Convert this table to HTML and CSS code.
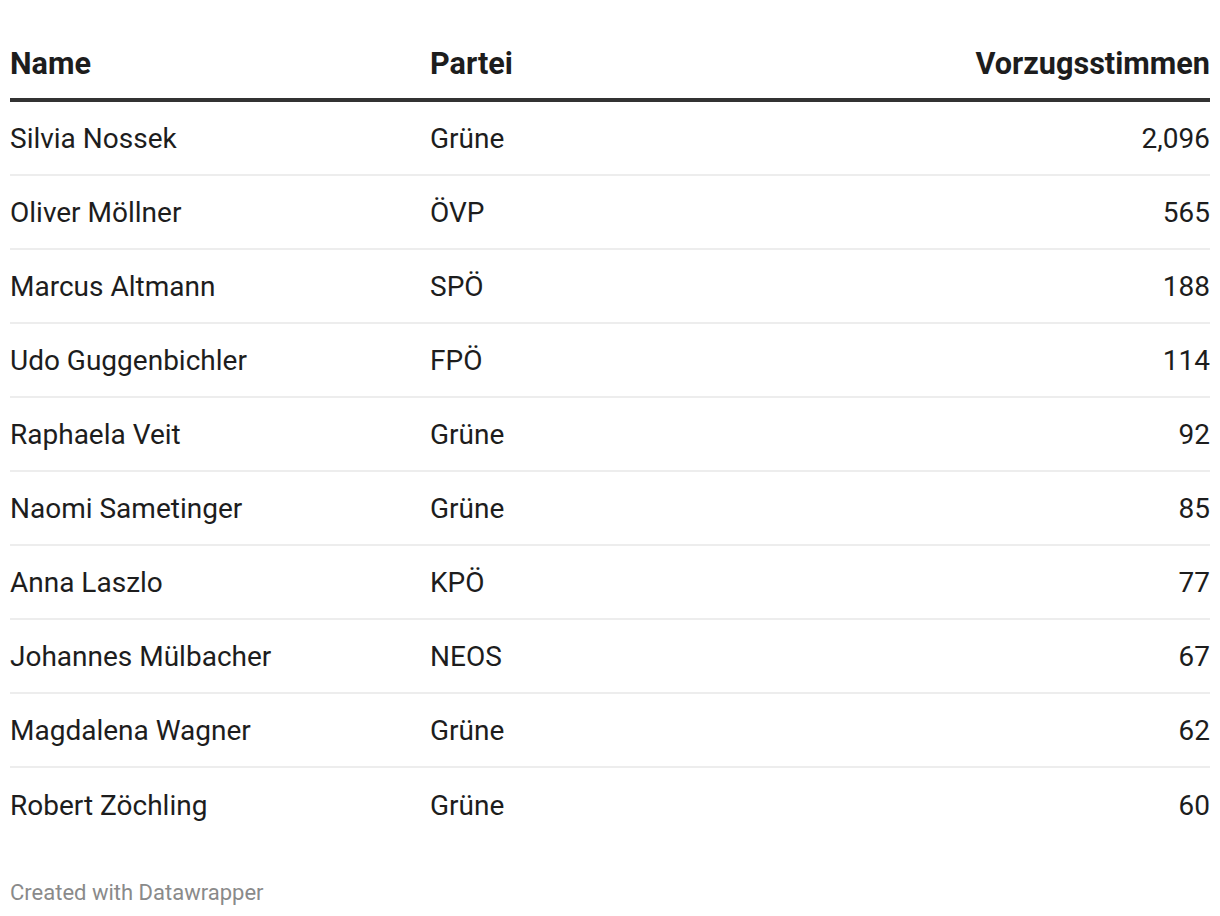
FILE: index.html
```html
<!DOCTYPE html>
<html lang="de">
<head>
<meta charset="utf-8">
<title>Vorzugsstimmen</title>
<link rel="stylesheet" href="styles.css">
</head>
<body>
<div class="wrap">
  <div class="table">
    <div class="row head">
      <div class="cell c-name">Name</div>
      <div class="cell c-party">Partei</div>
      <div class="cell c-votes">Vorzugsstimmen</div>
    </div>
    <div class="row"><div class="cell c-name">Silvia Nossek</div><div class="cell c-party">Grüne</div><div class="cell c-votes">2,096</div></div>
    <div class="row"><div class="cell c-name">Oliver Möllner</div><div class="cell c-party">ÖVP</div><div class="cell c-votes">565</div></div>
    <div class="row"><div class="cell c-name">Marcus Altmann</div><div class="cell c-party">SPÖ</div><div class="cell c-votes">188</div></div>
    <div class="row"><div class="cell c-name">Udo Guggenbichler</div><div class="cell c-party">FPÖ</div><div class="cell c-votes">114</div></div>
    <div class="row"><div class="cell c-name">Raphaela Veit</div><div class="cell c-party">Grüne</div><div class="cell c-votes">92</div></div>
    <div class="row"><div class="cell c-name">Naomi Sametinger</div><div class="cell c-party">Grüne</div><div class="cell c-votes">85</div></div>
    <div class="row"><div class="cell c-name">Anna Laszlo</div><div class="cell c-party">KPÖ</div><div class="cell c-votes">77</div></div>
    <div class="row"><div class="cell c-name">Johannes Mülbacher</div><div class="cell c-party">NEOS</div><div class="cell c-votes">67</div></div>
    <div class="row"><div class="cell c-name">Magdalena Wagner</div><div class="cell c-party">Grüne</div><div class="cell c-votes">62</div></div>
    <div class="row last"><div class="cell c-name">Robert Zöchling</div><div class="cell c-party">Grüne</div><div class="cell c-votes">60</div></div>
  </div>
  <div class="footer">Created with Datawrapper</div>
</div>
</body>
</html>
```
FILE: styles.css
```css
html, body {
  margin: 0;
  padding: 0;
  background: #ffffff;
}
body {
  font-family: Roboto, "Liberation Sans", Arial, sans-serif;
  color: #1d1d1d;
}
.wrap {
  padding: 46px 10px 0 10px;
}
.table {
  display: flex;
  flex-direction: column;
}
.row {
  display: flex;
  align-items: center;
  box-sizing: border-box;
  height: 74px;
  padding-top: 2px;
  border-bottom: 2px solid #ededed;
  font-size: 28px;
  line-height: 70px;
}
.row.last {
  border-bottom: none;
}
.row.head {
  height: auto;
  align-items: flex-end;
  padding-top: 0;
  font-size: 30.6px;
  line-height: 36px;
  font-weight: 700;
  padding-bottom: 16px;
  border-bottom: 4px solid #333333;
}
.cell {
  white-space: nowrap;
}
.c-name {
  width: 420px;
  flex: 0 0 420px;
}
.c-party {
  flex: 1 1 auto;
}
.c-votes {
  text-align: right;
  font-variant-numeric: tabular-nums;
}
.footer {
  margin-top: 38px;
  font-size: 22px;
  line-height: 26px;
  color: #8a8a8a;
}
```
